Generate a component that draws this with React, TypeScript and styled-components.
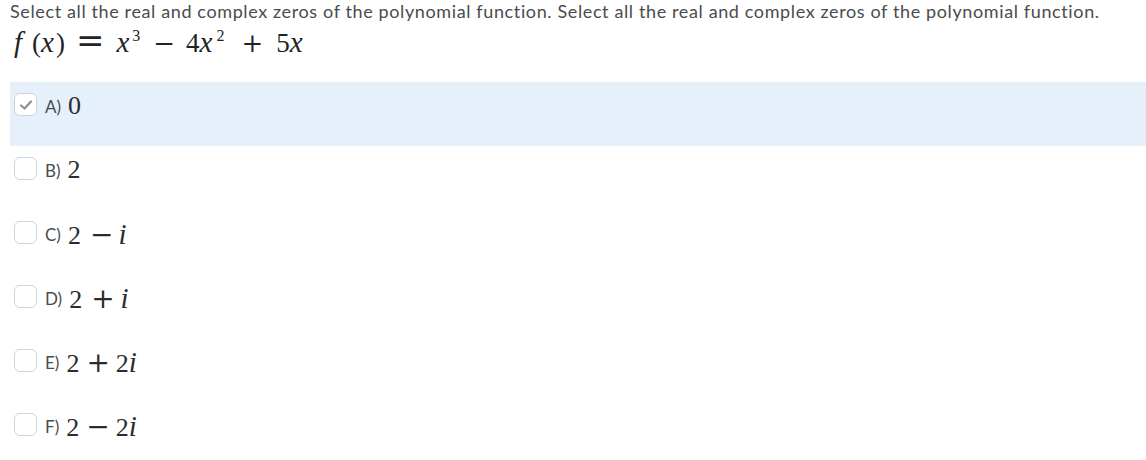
import styled, { createGlobalStyle } from 'styled-components';

const GlobalStyle = createGlobalStyle`
  body {
    margin: 0;
    background: #ffffff;
  }
`;

const Page = styled.div`
  padding: 0 0 0 10px;
  width: 1146px;
  height: 460px;
  box-sizing: border-box;
  overflow: hidden;
`;

const Question = styled.div`
  font-family: Lato, 'Liberation Sans', sans-serif;
  font-size: 18px;
  line-height: 22px;
  letter-spacing: 0.62px;
  color: #494c4e;
  white-space: nowrap;
`;

const Formula = styled.div`
  font-family: 'Liberation Serif', 'DejaVu Serif', serif;
  font-size: 27px;
  line-height: 36px;
  height: 36px;
  color: #222324;
  white-space: nowrap;
  padding-left: 4px;
`;

// every math piece is an inline-block with its own left margin
const M = styled.span<{ $ml?: number }>`
  display: inline-block;
  margin-left: ${(p) => p.$ml ?? 0}px;
`;

const V = styled(M)`
  font-style: italic;
  font-size: 29px;
`;

const Op = styled(M)<{ $size?: number }>`
  font-family: 'DejaVu Serif', serif;
  font-size: ${(p) => p.$size ?? 26}px;
`;

const Sup = styled(M)`
  font-size: 16px;
  position: relative;
  top: -11px;
  line-height: 0;
`;

const Options = styled.div`
  margin-top: 24px;
  display: flex;
  flex-direction: column;
`;

const Row = styled.div<{ $selected?: boolean }>`
  height: 64px;
  box-sizing: border-box;
  padding: 11px 0 0 4px;
  display: flex;
  align-items: flex-start;
  background: ${(p) => (p.$selected ? '#e6f0fa' : 'transparent')};
`;

const Box = styled.div`
  width: 23px;
  height: 23px;
  box-sizing: border-box;
  border: 1px solid #cdd5dc;
  border-radius: 6px;
  background: #ffffff;
  display: flex;
  align-items: center;
  justify-content: center;
  flex-shrink: 0;
`;

const Letter = styled.span`
  font-family: Lato, 'Liberation Sans', sans-serif;
  font-size: 17px;
  color: #494c4e;
  line-height: 27px;
  margin-left: 8px;
  margin-right: 7px;
`;

const Answer = styled.span`
  font-family: 'Liberation Serif', 'DejaVu Serif', serif;
  font-size: 26px;
  color: #2b2c2e;
  line-height: 26px;
  white-space: nowrap;
`;

const Check = () => (
  <svg width="14" height="12" viewBox="0 0 14 12">
    <path d="M2 6.5 L5.5 9.5 L12 2.5" fill="none" stroke="#8a8f93" strokeWidth="2.2" strokeLinecap="round" strokeLinejoin="round" />
  </svg>
);

const options = [
  { key: 'A', selected: true, content: <>0</> },
  { key: 'B', content: <>2</> },
  { key: 'C', content: <>2<Op $ml={9} $size={28}>−</Op><V $ml={5}>i</V></> },
  { key: 'D', content: <>2<Op $ml={9} $size={28}>+</Op><V $ml={6}>i</V></> },
  { key: 'E', content: <>2<Op $ml={7} $size={28}>+</Op><M $ml={6}>2</M><V>i</V></> },
  { key: 'F', content: <>2<Op $ml={7} $size={28}>−</Op><M $ml={6}>2</M><V>i</V></> },
];

const q = 'Select all the real and complex zeros of the polynomial function.';

export default function App() {
  return (
    <Page>
      <GlobalStyle />
      <Question>{q} {q}</Question>
      <Formula>
        <V>f</V>
        <M $ml={10}>(</M>
        <V>x</V>
        <M $ml={2}>)</M>
        <Op $ml={11} $size={34}>=</Op>
        <V $ml={12}>x</V>
        <Sup $ml={3}>3</Sup>
        <Op $ml={13}>−</Op>
        <M $ml={11}>4</M>
        <V>x</V>
        <Sup $ml={4}>2</Sup>
        <Op $ml={17}>+</Op>
        <M $ml={13}>5</M>
        <V>x</V>
      </Formula>
      <Options>
        {options.map((o) => (
          <Row key={o.key} $selected={o.selected}>
            <Box>{o.selected && <Check />}</Box>
            <Letter>{o.key})</Letter>
            <Answer>{o.content}</Answer>
          </Row>
        ))}
      </Options>
    </Page>
  );
}
